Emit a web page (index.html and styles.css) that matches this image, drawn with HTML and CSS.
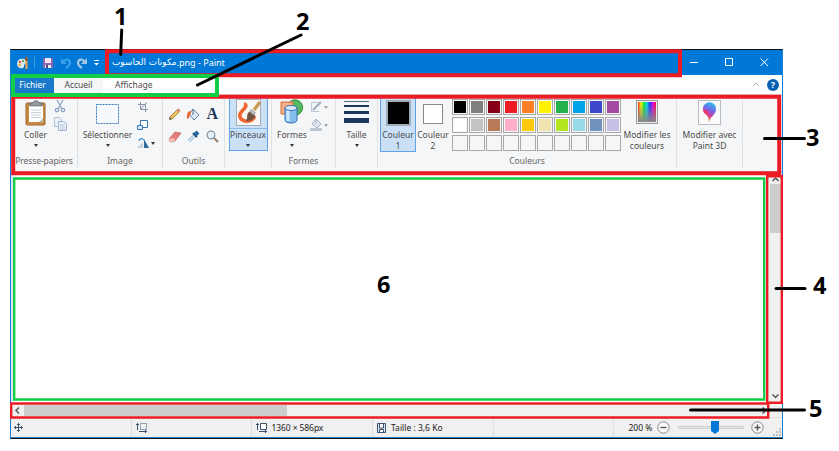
FILE: index.html
```html
<!DOCTYPE html>
<html lang="fr">
<head>
<meta charset="utf-8">
<title>Paint</title>
<link rel="stylesheet" href="styles.css">
</head>
<body>
<main class="window">
  <header class="titlebar">
    <div class="quick">
      <svg width="14" height="14" viewBox="0 0 14 14"><path d="M1 8C1 4 4 2 8 3c3 1 3 4 1 5s0 3-2 4C4 13 1 11 1 8Z" fill="#d9e6ee"/><circle cx="4" cy="6" r="1.2" fill="#e8502e"/><circle cx="7" cy="5" r="1.1" fill="#42a64b"/><circle cx="3.5" cy="9" r="1.2" fill="#e2b21d"/><path d="M10.500 1v12" stroke="#e7a24b" stroke-width="2.200"/><path d="M10.500 1v4" stroke="#7b5636" stroke-width="2.200"/></svg>
      <i class="bar"></i>
      <svg class="save" width="12" height="12" viewBox="0 0 12 12"><path d="M1 1h10v10H1z" fill="#8c65b1"/><path d="M3 1h6v5H3z" fill="#f4e9f4"/><path d="M3 8h6v3H3z" fill="#eee"/><path d="M4 8h2v3H4z" fill="#594279"/></svg>
      <svg class="undo" width="12" height="12" viewBox="0 0 12 12"><path d="M1 1v6h6z" fill="#36a0e8"/><path d="M3 5C6 1 10 2.500 10 6c0 2-1.500 3.500-4 5" fill="none" stroke="#36a0e8" stroke-width="2.200"/></svg>
      <svg class="redo" width="12" height="12" viewBox="0 0 12 12"><path d="M11 1v6H5z" fill="#a3c3df"/><path d="M9 5C6 1 2 2.500 2 6c0 2 1.500 3.500 4 5" fill="none" stroke="#a3c3df" stroke-width="2.200"/></svg>
      <svg class="more" width="7" height="7" viewBox="0 0 7 7"><path d="M1 1.500h5" stroke="#fff"/><path d="M1 4h5L3.500 6.500z" fill="#fff"/></svg>
    </div>
    <div class="filename"><bdi>مكونات الحاسوب</bdi><span>.png - Paint</span></div>
    <div class="controls">
      <svg width="9" height="9"><path d="M0 4.500h8" stroke="#fff"/></svg>
      <svg width="9" height="9"><path d="M.5.500h7v7h-7z" fill="none" stroke="#fff"/></svg>
      <svg width="9" height="9"><path d="m.5.500 7.500 7.500M8 .5.500 8" stroke="#fff"/></svg>
    </div>
  </header>

  <nav class="tabs">
    <span class="tab file">Fichier</span><span class="tab active">Accueil</span><span class="tab">Affichage</span>
    <div class="help">
      <svg width="8" height="5"><path d="m1 4 3-3 3 3" fill="none" stroke="#aaa"/></svg>
      <b>?</b>
    </div>
  </nav>

  <section class="ribbon">
    <div class="group clipboard">
      <div class="content">
        <div class="tool">
          <div class="icon"><svg width="22" height="26" viewBox="0 0 22 26"><rect x="1" y="3" width="19" height="22" rx="1" fill="#c68a43" stroke="#9f6931"/><path d="M4 6h14v16H4z" fill="#fff"/><path d="M6 10h10M6 12.500h10M6 15h10M6 17.500h10" stroke="#c7d0dc"/><path d="M5 6V3h3c0-3 6-3 6 0h3v3z" fill="#929a9f" stroke="#555b60" stroke-width=".6"/><path d="m14 22 4-4v4z" fill="#b8c2ca"/></svg></div>
          <span>Coller</span><i class="arrow"></i>
        </div>
        <div class="stack">
          <svg width="12" height="14" viewBox="0 0 12 14"><path d="M3 1 8 10M9 1 4 10" stroke="#9aabc7" stroke-width="1.500"/><circle cx="3" cy="11" r="1.700" fill="none" stroke="#8ba2c7" stroke-width="1.300"/><circle cx="9" cy="11" r="1.700" fill="none" stroke="#8ba2c7" stroke-width="1.300"/></svg>
          <svg width="13" height="14" viewBox="0 0 13 14"><path d="M.5.500h5l2 2v7h-7z" fill="#edf2f9" stroke="#aebfd8"/><path d="M4.500 4.500h5l3 2v7h-8z" fill="#edf2f9" stroke="#9fb4d4"/><path d="M6 8h5M6 10h5M6 12h5" stroke="#a8bad6" stroke-width=".7"/></svg>
        </div>
      </div>
      <div class="caption">Presse-papiers</div>
    </div>

    <div class="group image">
      <div class="content">
        <div class="tool">
          <div class="icon"><svg width="24" height="22"><rect x=".5" y=".5" width="22" height="19" fill="#f5f9fd" stroke="#3479ba" stroke-dasharray="2 1"/></svg></div>
          <span>Sélectionner</span><i class="arrow"></i>
        </div>
        <div class="stack">
          <svg width="12" height="12" viewBox="0 0 12 12"><path d="M3.500 1v7.500H11M1 3.500h7.500V11M4 8l6-7" fill="none" stroke="#8995aa"/></svg>
          <svg width="12" height="12" viewBox="0 0 12 12"><path d="M3.500 1.500h7v7h-7z" fill="#fff" stroke="#3b78b4"/><path d="M.5 6.500h5v4h-5z" fill="#d5e9f9" stroke="#3b78b4"/></svg>
          <div class="with-arrow"><svg width="13" height="12" viewBox="0 0 13 12"><path d="M0 11h6V5z" fill="#c5d3df"/><path d="M7 2v9h5z" fill="#2d6d9f"/><path d="M2 4c1-3 3-3 5-1" fill="none" stroke="#408fd0" stroke-width="1.300"/></svg><i class="arrow"></i></div>
        </div>
      </div>
      <div class="caption">Image</div>
    </div>

    <div class="group outils">
      <div class="toolgrid">
        <svg width="13" height="13" viewBox="0 0 13 13"><path d="m1 12 1-4 3 3z" fill="#5d5143"/><path d="M3 10 10 3" stroke="#987128" stroke-width="3.600"/><path d="M3 10 10 3" stroke="#f5ce63" stroke-width="2.200"/><path d="M9.500 3.500 11.500 1.500" stroke="#d88974" stroke-width="3.400"/></svg>
        <svg width="14" height="13" viewBox="0 0 14 13"><path d="m7 1 6 6-5 5-5-6z" fill="#dcebf5" stroke="#6583a1"/><path d="M7 1v6" stroke="#526f90"/><path d="M5 3C1 3 1 6 1 11c3 0 2-4 4-5z" fill="#e86b35"/></svg>
        <span class="letter">A</span>
        <svg width="14" height="13" viewBox="0 0 14 13"><path d="m1 9 6-7 6 1-6 8-5 1z" fill="#e77d7a" stroke="#bf6464" stroke-width=".7"/><path d="m1 9 5-1 1 3-5 1z" fill="#f7c4bd"/></svg>
        <svg width="13" height="13" viewBox="0 0 13 13"><path d="m2 11 6-6" stroke="#8aabc7" stroke-width="3"/><path d="m2 11 6-6" stroke="#e9f5fc" stroke-width="1.300"/><path d="m6 3 4 4" stroke="#164d79" stroke-width="2"/><path d="m8 5 3-3" stroke="#2768a0" stroke-width="4"/></svg>
        <svg width="13" height="13" viewBox="0 0 13 13"><path d="m8 8 4 4" stroke="#987c66" stroke-width="2"/><circle cx="5" cy="5" r="3.800" fill="#e5f3fc" stroke="#8497aa" stroke-width="1.300"/></svg>
      </div>
      <div class="caption">Outils</div>
    </div>

    <div class="group brushes">
      <div class="tool selected">
        <div class="icon"><svg width="25" height="27" viewBox="0 0 25 27"><rect x=".5" y=".5" width="24" height="26" fill="#f8f7f4" stroke="#a6acb3"/><path d="M8 5C12 6 9 9 6 12c-4 4-2 9 3 10 5 1 8-1 10-5" fill="none" stroke="#ef6431" stroke-width="3.500"/><path d="m18 11 6-8" stroke="#c99a57" stroke-width="3.500"/><path d="M13 13c3-1 6 1 6 4-1 4-5 5-9 5 2-2 0-7 3-9z" fill="#715342"/><path d="m14 11 5 4" stroke="#b5bac0" stroke-width="3.500"/></svg></div>
        <span>Pinceaux</span><i class="arrow"></i>
      </div>
    </div>

    <div class="group formes">
      <div class="content">
        <div class="tool">
          <div class="icon"><svg width="24" height="26" viewBox="0 0 24 26"><circle cx="15" cy="8.500" r="7.700" fill="#53b861" stroke="#339042"/><path d="M1 3h12v12H1z" fill="#f4ae88" stroke="#d96c39"/><path d="M5 9v12c0 4 12 4 12 0V9" fill="#87bef0" stroke="#3672ad"/><path d="M8 11v11" stroke="#d2eafe" stroke-width="3"/><ellipse cx="11" cy="9" rx="6" ry="2.500" fill="#d7ebfc" stroke="#3672ad"/></svg></div>
          <span>Formes</span><i class="arrow"></i>
        </div>
        <div class="stack">
          <div class="with-arrow pale"><svg width="13" height="12" viewBox="0 0 13 12"><path d="M9 1.500H1.500v9H9" fill="none" stroke="#aab8ca"/><path d="m3 9 8-8" stroke="#8495ae" stroke-width="2"/></svg><i class="arrow"></i></div>
          <div class="with-arrow pale"><svg width="13" height="14" viewBox="0 0 13 14"><path d="m6 1 5 5-4 4-5-4z" fill="#dce4ef" stroke="#8d9eb7"/><path d="M6 1v5" stroke="#8d9eb7"/><path d="M0 10h12v3H0z" fill="#a9b7c9"/></svg><i class="arrow"></i></div>
        </div>
      </div>
      <div class="caption">Formes</div>
    </div>

    <div class="group size">
      <div class="tool">
        <div class="icon"><svg width="25" height="25"><path d="M0 1.500h25" stroke="#526c82"/><path d="M0 6h25" stroke="#1f385f" stroke-width="2"/><path d="M0 12.500h25" stroke="#1f385f" stroke-width="3"/><path d="M0 20.500h25" stroke="#1f385f" stroke-width="5"/></svg></div>
        <span>Taille</span><i class="arrow"></i>
      </div>
    </div>

    <div class="group colours">
      <div class="content">
        <div class="tool colour selected"><div class="icon"><i class="well black"></i></div><span>Couleur<br>1</span></div>
        <div class="tool colour"><div class="icon"><i class="well"></i></div><span>Couleur<br>2</span></div>
        <div class="palette">
          <i style="background:#000"></i><i style="background:#7f7f7f"></i><i style="background:#880015"></i><i style="background:#ed1c24"></i><i style="background:#ff7f27"></i><i style="background:#fff200"></i><i style="background:#22b14c"></i><i style="background:#00a2e8"></i><i style="background:#3f48cc"></i><i style="background:#a349a4"></i>
          <i style="background:#fff"></i><i style="background:#c3c3c3"></i><i style="background:#b97a57"></i><i style="background:#ffaec9"></i><i style="background:#ffc90e"></i><i style="background:#efe4b0"></i><i style="background:#b5e61d"></i><i style="background:#99d9ea"></i><i style="background:#7092be"></i><i style="background:#c8bfe7"></i>
          <i></i><i></i><i></i><i></i><i></i><i></i><i></i><i></i><i></i><i></i>
        </div>
        <div class="tool edit"><div class="icon"><i class="spectrum"></i></div><span>Modifier les<br>couleurs</span></div>
      </div>
      <div class="caption">Couleurs</div>
    </div>

    <div class="group paint3d">
      <div class="tool"><div class="icon"><svg width="23" height="25" viewBox="0 0 23 25"><defs><linearGradient id="drop" x1=".7" y1="0" x2=".4" y2="1"><stop stop-color="#20c8ed"/><stop offset=".4" stop-color="#7864e8"/><stop offset=".7" stop-color="#d43b94"/><stop offset="1" stop-color="#ffae18"/></linearGradient></defs><rect x=".5" y=".5" width="22" height="24" fill="#fafafa" stroke="#b9bdc1"/><path d="M5 9c0-9 13-9 13 0 0 6-5 6-7 13-1-4 0-5-2-7-2-1-4-3-4-6z" fill="url(#drop)"/><path d="M5 9c0 5 3 4 5 8 2-4-1-8-5-8z" fill="#e83e6d"/></svg></div><span>Modifier avec<br>Paint 3D</span></div>
    </div>
  </section>

  <section class="workspace">
    <div class="canvas"></div>
    <div class="vscroll"><svg width="7" height="5"><path d="m.5 4 3-3 3 3" fill="none" stroke="#555" stroke-width="1.500"/></svg><i></i><svg width="7" height="5"><path d="m.5.500 3 3 3-3" fill="none" stroke="#555" stroke-width="1.500"/></svg></div>
  </section>
  <div class="hscroll"><svg width="5" height="7"><path d="m4 .5-3 3 3 3" fill="none" stroke="#555" stroke-width="1.500"/></svg><i></i><svg width="5" height="7"><path d="m.5.500 3 3-3 3" fill="none" stroke="#555" stroke-width="1.500"/></svg></div>

  <footer class="status">
    <div><svg width="9" height="9"><path d="M4.500 0v9M0 4.500h9M3 1.500h3M3 7.500h3M1.500 3v3M7.500 3v3" stroke="#3c536d"/></svg></div>
    <div><svg width="11" height="11"><path d="M1.500 1v7M0 2.500h3" stroke="#3c536d"/><path d="M4.500 1.500h6v6h-6z" fill="none" stroke="#3c536d" stroke-dasharray="1 1"/><path d="M3 9.500h8M9.500 8v3" stroke="#3c536d"/></svg></div>
    <div><svg width="11" height="11"><path d="M1.500 1v7M0 2.500h3M3 9.500h8M9.500 8v3" stroke="#3c536d"/><path d="M4.500 1.500h6v6h-6z" fill="#fff" stroke="#3c536d"/></svg><span class="dim">1360 × 586px</span></div>
    <div><svg width="9" height="10"><path d="M.5.500h8v9h-8z" fill="#dce7ef" stroke="#3c536d"/><path d="M2.500 1v4h4V1M2.500 9V6.500h4V9" fill="#fff" stroke="#3c536d"/></svg><span class="bytes">Taille : 3,6 Ko</span></div>
    <div></div>
    <div class="zoom"><span>200 %</span>
      <svg width="13" height="13"><circle cx="6.500" cy="6.500" r="5.700" fill="#fafafa" stroke="#888"/><path d="M3.500 6.500h6" stroke="#555" stroke-width="1.400"/></svg>
      <svg class="slider" width="66" height="15"><path d="M.5 6.500h65v2H.5z" fill="#e5e8e8" stroke="#ccd0d0"/><path d="M33 1h8v10l-4 3-4-3z" fill="#0078d7"/></svg>
      <svg width="13" height="13"><circle cx="6.500" cy="6.500" r="5.700" fill="#fafafa" stroke="#888"/><path d="M3.500 6.500h6M6.500 3.500v6" stroke="#555" stroke-width="1.400"/></svg>
      <svg class="grip" width="8" height="8"><path d="M6 0h2v2H6zM3 3h2v2H3zM6 3h2v2H6zM0 6h2v2H0zM3 6h2v2H3zM6 6h2v2H6z" fill="#bfbfbf"/></svg>
    </div>
  </footer>
</main>

<svg class="annotations" width="839" height="451">
  <g fill="none" stroke="#ed1c24">
    <path d="M107 51.200h573v24H107z" stroke-width="4"/>
    <path d="M13.200 96.700h766v76.500h-766z" stroke-width="4"/>
    <path d="M767.200 176.200h14.600v226.500h-14.600z" stroke-width="2.400"/>
    <path d="M11.200 403.500h757v14H11.200z" stroke-width="2.400"/>
  </g>
  <g fill="none" stroke="#12cd45"><path d="M13 76h204v19H13z" stroke-width="4"/><path d="M14.200 178.500h750v221h-750z" stroke-width="2.400"/></g>
  <path d="m121.700 30-1 24.500M301 35 197.500 85M764.500 138.500h40M776 288.500h29M690.500 410h114" fill="none" stroke="#000" stroke-width="3" stroke-linecap="round"/>
</svg>
<b class="mark m1">1</b><b class="mark m2">2</b><b class="mark m3">3</b><b class="mark m4">4</b><b class="mark m5">5</b><b class="mark m6">6</b>
</body>
</html>
```

FILE: styles.css
```css
* { box-sizing: border-box; }
body { margin: 0; width: 839px; height: 451px; overflow: hidden; background: #fff; color: #4c4c4c; font: 8.5px/11px "Noto Sans", "Open Sans", sans-serif; }
svg { display: block; flex: none; overflow: visible; }
i { display: block; font-style: normal; flex: none; }
span { white-space: nowrap; }
.window { width: 773px; height: 390px; margin: 49px 0 0 10px; border: 1px solid #1680d6; border-top-color: #111; border-bottom-color: #111; background: #f0f0f0; display: flex; flex-direction: column; }
.titlebar { height: 25px; flex: none; background: #0078d7; color: #fff; display: flex; align-items: center; }
.quick { width: 101px; display: flex; align-items: center; padding-left: 5px; }
.bar { width: 1px; height: 11px; margin: 0 7px 0 4px; background: #439bdc; }
.undo { margin-left: 6px; }
.redo { margin-left: 4px; }
.more { margin-left: 5px; }
.filename { flex: 1; display: flex; align-items: center; direction: ltr; font-size: 9px; }
.filename bdi { font-family: "DejaVu Sans", sans-serif; font-size: 8.9px; }
.controls { display: flex; gap: 26px; padding-right: 13px; }
.tabs { height: 19px; flex: none; background: #fff; display: flex; line-height: 20px; }
.tab { text-align: center; }
.file { width: 43px; background: #1979ca; color: #fff; }
.active { width: 49px; background: #f5f6f7; }
.tab:nth-child(3) { padding-left: 12px; }
.help { margin-left: auto; display: flex; align-items: center; gap: 7px; padding-right: 3px; }
.help b { width: 12px; height: 12px; border-radius: 50%; background: #0861b2; color: #fff; text-align: center; font-size: 9px; line-height: 12px; }
.ribbon { height: 79px; flex: none; background: #f5f6f7; border-top: 1px solid #dadbdc; border-bottom: 2px solid #cfd5df; display: flex; }
.group { height: 73px; border-right: 1px solid #dfe1e3; display: flex; flex-direction: column; align-items: center; }
.clipboard { width: 67px; }
.image { width: 85px; }
.outils { width: 62px; }
.brushes { width: 47px; }
.formes { width: 64px; }
.size { width: 42px; }
.colours { width: 299px; }
.paint3d { width: 66px; }
.content { width: 100%; height: 60px; display: flex; }
.caption { line-height: 15px; height: 15px; color: #666; white-space: nowrap; }
.clipboard .caption { letter-spacing: -.08px; }
.tool { display: flex; flex-direction: column; align-items: center; text-align: center; padding-top: 4px; height: 57px; width: 46px; }
.icon { height: 30px; display: flex; align-items: flex-start; justify-content: center; padding-top: 1px; flex: none; }
.arrow { border: 2.5px solid transparent; border-top: 3px solid #333; border-bottom: 0; margin-top: 4px; }
.selected { background: #c9e0f7; border: 1px solid #62a2e4; }
.stack { height: 54px; display: flex; flex-direction: column; padding-top: 4px; gap: 4px; align-items: flex-start; }
.with-arrow { display: flex; align-items: center; gap: 1px; }
.with-arrow .arrow { margin: 0; }
.pale { opacity: .75; }
.pale .arrow { border-top-color: #888; }
.clipboard .tool { width: 43px; margin-left: 3px; }
.clipboard .stack { margin-left: -3px; }
.image .tool { width: 57px; margin-left: 1px; }
.image .icon { padding-top: 5px; }
.image .stack { padding-top: 6px; gap: 6px; margin-left: 1px; }
.toolgrid { width: 56px; height: 60px; padding: 7px 0 6px; display: grid; grid-template-columns: repeat(3, 1fr); place-items: center; }
.letter { font: bold 16px/16px "Liberation Serif", serif; color: #1b365d; }
.brushes .tool { width: 39px; height: 56px; padding-top: 2px; }
.brushes .icon { height: 31px; border-bottom: 1px solid #8abbeb; width: 100%; }
.formes .tool { width: 40px; }
.formes .icon { padding-top: 0; }
.formes .stack { padding-top: 6px; margin-left: -2px; gap: 5px; }
.colours .tool { width: 36px; }
.colours .colour:first-child { margin-left: 2px; height: 57px; padding-top: 3px; }
.colours .colour:nth-child(2) { margin-left: -1px; margin-right: 1px; }
.colours .colour:nth-child(2) .icon { padding-top: 5px; }
.well { width: 20px; height: 20px; background: #fff; border: 1px solid #888; }
.black { width: 25px; height: 26px; background: #000; border: 2px solid #9eadb8; }
.palette { display: grid; grid-template-columns: repeat(10, 16px); grid-template-rows: repeat(3, 16px); gap: 2px 1px; padding-top: 4px; width: 169px; }
.palette i { border: 1px solid #a9a9a9; box-shadow: inset 0 0 0 1px #f5f6f7; }
.colours .edit { width: 52px; }
.spectrum { width: 22px; height: 24px; border: 1px solid #999; background: linear-gradient(to top, #888, transparent) content-box, linear-gradient(90deg, #f22, #ff0, #0e3, #0df, #22f, #e0e, #f03) content-box, #eee; padding: 1px; }
.workspace { height: 231px; flex: none; display: flex; background: #dbe5f1; }
.canvas { flex: 1; margin: 2px 1px 1px 2px; background: #fff; }
.vscroll { width: 15px; margin-right: 0; padding: 4px 0 5px 1px; background: #f0f0f0; display: flex; flex-direction: column; align-items: center; }
.vscroll i { width: 11px; height: 49px; margin-top: 2px; background: #cdcdcd; }
.vscroll svg:last-child { margin-top: auto; }
.hscroll { height: 13px; flex: none; display: flex; align-items: center; padding: 0 15px 0 4px; }
.hscroll i { width: 263px; height: 11px; margin-left: 4px; background: #cdcdcd; }
.hscroll svg:last-child { margin-left: auto; }
.status { flex: 1; border-top: 1px solid #ddd; border-bottom: 1px solid #2782c9; display: flex; color: #222; }
.status > div { width: 120.7px; border-right: 1px solid #dedede; display: flex; align-items: center; gap: 4px; padding-left: 4px; }
.status > div:first-child { padding-left: 3px; }
.status .dim { letter-spacing: -.08px; }
.status .bytes { margin-left: 1px; }
.status > div.zoom { width: auto; flex: 1; border: 0; padding-left: 14px; gap: 5px; }
.slider { margin: 0 2px 0 3px; }
.grip { margin: 8px 1px 0 auto; }
.annotations { position: absolute; left: 0; top: 0; }
.mark { position: absolute; color: #000; font: bold 23.5px/24px "Open Sans", sans-serif; }
.m1 { left: 114px; top: 4px; }
.m2 { left: 296px; top: 9px; }
.m3 { left: 806px; top: 125px; }
.m4 { left: 813px; top: 273px; }
.m5 { left: 809px; top: 396px; }
.m6 { left: 377px; top: 272px; }
```
